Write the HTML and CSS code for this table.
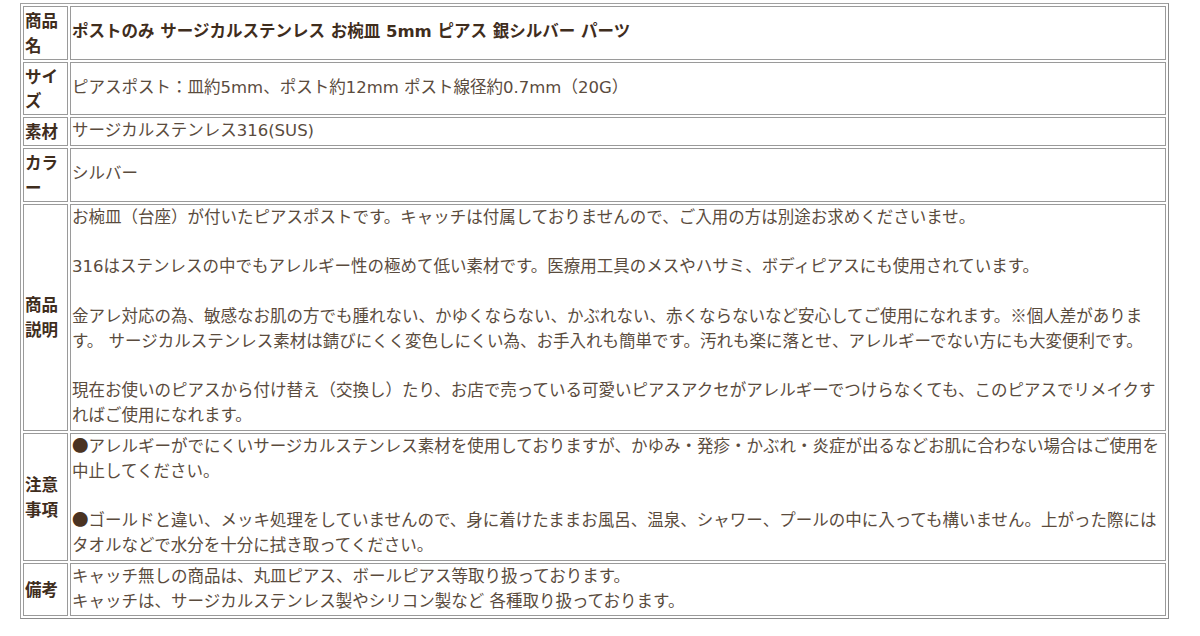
FILE: index.html
```html
<!DOCTYPE html>
<html lang="ja">
<head>
<meta charset="utf-8">
<title>商品情報</title>
<link rel="stylesheet" href="styles.css">
</head>
<body>
<table class="spec">
  <tr>
    <th class="label">商品名</th>
    <td class="value title">ポストのみ サージカルステンレス お椀皿 5mm ピアス 銀シルバー パーツ</td>
  </tr>
  <tr>
    <th class="label">サイズ</th>
    <td class="value">ピアスポスト：皿約5mm、ポスト約12mm ポスト線径約0.7mm（20G）</td>
  </tr>
  <tr>
    <th class="label">素材</th>
    <td class="value">サージカルステンレス316(SUS)</td>
  </tr>
  <tr>
    <th class="label">カラー</th>
    <td class="value">シルバー</td>
  </tr>
  <tr>
    <th class="label">商品説明</th>
    <td class="value">お椀皿（台座）が付いたピアスポストです。キャッチは付属しておりませんので、ご入用の方は別途お求めくださいませ。<br><br>316はステンレスの中でもアレルギー性の極めて低い素材です。医療用工具のメスやハサミ、ボディピアスにも使用されています。<br><br>金アレ対応の為、敏感なお肌の方でも腫れない、かゆくならない、かぶれない、赤くならないなど安心してご使用になれます。<span class="cjk">※</span>個人差があります。 サージカルステンレス素材は錆びにくく変色しにくい為、お手入れも簡単です。汚れも楽に落とせ、アレルギーでない方にも大変便利です。<br><br>現在お使いのピアスから付け替え（交換し）たり、お店で売っている可愛いピアスアクセがアレルギーでつけらなくても、このピアスでリメイクすればご使用になれます。</td>
  </tr>
  <tr>
    <th class="label">注意事項</th>
    <td class="value"><span class="cjk bullet">●</span>アレルギーがでにくいサージカルステンレス素材を使用しておりますが、かゆみ・発疹・かぶれ・炎症が出るなどお肌に合わない場合はご使用を中止してください。<br><br><span class="cjk bullet">●</span>ゴールドと違い、メッキ処理をしていませんので、身に着けたままお風呂、温泉、シャワー、プールの中に入っても構いません。上がった際にはタオルなどで水分を十分に拭き取ってください。</td>
  </tr>
  <tr>
    <th class="label">備考</th>
    <td class="value">キャッチ無しの商品は、丸皿ピアス、ボールピアス等取り扱っております。<br>キャッチは、サージカルステンレス製やシリコン製など 各種取り扱っております。</td>
  </tr>
</table>
</body>
</html>
```

FILE: styles.css
```css
html, body {
  margin: 0;
  padding: 0;
  background: #ffffff;
}

body {
  font-family: "DejaVu Sans", "Noto Sans CJK JP", sans-serif;
  font-size: 16.5px;
  line-height: 24.8px;
  color: #5a4b3d;
}

.spec {
  margin: 3px 0 0 20px;
  width: 1149px;
  table-layout: fixed;
  border-collapse: separate;
  border-spacing: 2px;
  border: 1px solid #a0a0a0;
  border-right-color: #8c8c8c;
  border-bottom-color: #8c8c8c;
}

.spec th,
.spec td {
  border: 1px solid #9a9a9a;
  padding: 1px;
  vertical-align: middle;
}

.label {
  width: 41px;
  text-align: left;
  font-weight: bold;
  color: #3f2d1d;
  font-family: "Noto Sans CJK JP", sans-serif;
}

.value {
  text-align: left;
}

.title {
  font-weight: bold;
  color: #3f2d1d;
}

.cjk {
  font-family: "Noto Sans CJK JP", sans-serif;
  line-height: 0;
}

.bullet {
  color: #4a3322;
}
```
